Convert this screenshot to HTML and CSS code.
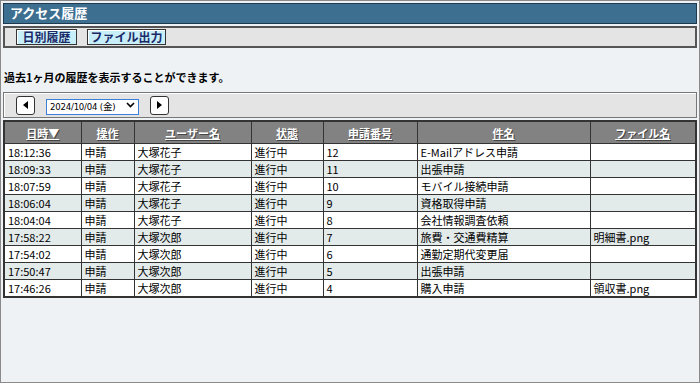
FILE: index.html
```html
<!DOCTYPE html>
<html lang="ja">
<head>
  <meta charset="UTF-8">
  <meta name="viewport" content="width=device-width, initial-scale=1.0">
  <title>アクセス履歴</title>
  <link rel="stylesheet" href="styles.css">
</head>
<body>
  <div class="page">
    <h1 class="title">アクセス履歴</h1>

    <div class="toolbar">
      <button class="tab-btn">日別履歴</button>
      <button class="tab-btn">ファイル出力</button>
    </div>

    <p class="note">過去1ヶ月の履歴を表示することができます。</p>

    <div class="nav">
      <button class="nav-btn"><span class="tri tri-left"></span></button>
      <div class="select-wrap">
        <select class="day-select">
          <option>2024/10/04 (金)</option>
        </select>
        <svg class="chevron" width="9" height="6" viewBox="0 0 9 6"><path d="M1 1 L4.5 4.5 L8 1" fill="none" stroke="#000" stroke-width="1.6"/></svg>
      </div>
      <button class="nav-btn"><span class="tri tri-right"></span></button>
    </div>

    <table class="log">
      <colgroup>
        <col style="width:77px"><col style="width:53px"><col style="width:117px"><col style="width:72px">
        <col style="width:94px"><col style="width:173px"><col>
      </colgroup>
      <thead>
        <tr><th>日時▼</th><th>操作</th><th>ユーザー名</th><th>状態</th><th>申請番号</th><th>件名</th><th>ファイル名</th></tr>
      </thead>
      <tbody>
        <tr><td>18:12:36</td><td>申請</td><td>大塚花子</td><td>進行中</td><td>12</td><td>E-Mailアドレス申請</td><td></td></tr>
        <tr><td>18:09:33</td><td>申請</td><td>大塚花子</td><td>進行中</td><td>11</td><td>出張申請</td><td></td></tr>
        <tr><td>18:07:59</td><td>申請</td><td>大塚花子</td><td>進行中</td><td>10</td><td>モバイル接続申請</td><td></td></tr>
        <tr><td>18:06:04</td><td>申請</td><td>大塚花子</td><td>進行中</td><td>9</td><td>資格取得申請</td><td></td></tr>
        <tr><td>18:04:04</td><td>申請</td><td>大塚花子</td><td>進行中</td><td>8</td><td>会社情報調査依頼</td><td></td></tr>
        <tr><td>17:58:22</td><td>申請</td><td>大塚次郎</td><td>進行中</td><td>7</td><td>旅費・交通費精算</td><td>明細書.png</td></tr>
        <tr><td>17:54:02</td><td>申請</td><td>大塚次郎</td><td>進行中</td><td>6</td><td>通勤定期代変更届</td><td></td></tr>
        <tr><td>17:50:47</td><td>申請</td><td>大塚次郎</td><td>進行中</td><td>5</td><td>出張申請</td><td></td></tr>
        <tr><td>17:46:26</td><td>申請</td><td>大塚次郎</td><td>進行中</td><td>4</td><td>購入申請</td><td>領収書.png</td></tr>
      </tbody>
    </table>
  </div>
</body>
</html>
```

FILE: styles.css
```css
/* 基本 */
html, body { margin: 0; padding: 0; }
body { font-family: "Noto Sans CJK JP", "Liberation Sans", sans-serif; font-size: 11px; color: #000; }
.page { box-sizing: border-box; width: 700px; height: 383px; border: 1px solid #8a8a8a; background: #eef2f5; padding: 2px; }

/* タイトル */
.title { margin: 0; height: 19px; line-height: 18px; padding: 0 6px; background: #3d6f91; border: 1px solid #1d3a4f; color: #fff; font-size: 13px; font-weight: bold; }

/* タブボタン */
.toolbar { margin-top: 2px; height: 18px; padding: 0 10px; background: #e4e4e4; border: 2px solid #555; display: flex; gap: 10px; align-items: center; }
.tab-btn { height: 16px; padding: 0; background: #c8eef9; border: 1px solid #333; box-shadow: inset 1px 1px 0 #fff; color: #1b2a66; font-family: inherit; font-size: 12px; font-weight: bold; line-height: 14px; white-space: nowrap; cursor: pointer; }
.tab-btn:first-child { width: 61px; margin-left: 1px; }
.tab-btn:last-child { width: 79px; }

.note { margin: 21px 0 0 1px; height: 16px; line-height: 16px; font-weight: bold; font-size: 11px; }

/* 日付ナビ */
.nav { margin-top: 7px; height: 22px; padding: 1px 12px; background: #e4e4e4; border: 1px solid #777; box-shadow: inset 1px 1px 0 #fff; display: flex; align-items: center; gap: 11px; }
.nav-btn { width: 19px; height: 19px; padding: 0; background: #fff; border: 1px solid #333; border-radius: 3px; display: flex; align-items: center; justify-content: center; cursor: pointer; }
.tri { width: 0; height: 0; border-top: 4px solid transparent; border-bottom: 4px solid transparent; }
.tri-left { border-right: 5px solid #000; }
.tri-right { border-left: 5px solid #000; }
.select-wrap { position: relative; width: 93px; height: 16px; }
.day-select { appearance: none; -webkit-appearance: none; box-sizing: border-box; width: 93px; height: 16px; padding: 0 0 0 3px; border: 1px solid #3b7fd6; border-radius: 0; background: #fff; font-family: "DejaVu Sans Condensed", "Noto Sans CJK JP", sans-serif; font-size: 9.5px; letter-spacing: -0.2px; color: #000; }
.chevron { position: absolute; right: 4px; top: 5px; pointer-events: none; }

/* 一覧 */
.log { margin-top: 2px; width: 694px; table-layout: fixed; border-collapse: collapse; border: 2px solid #333; }
.log th, .log td { border: 1px solid #333; padding: 0 3px; white-space: nowrap; overflow: hidden; }
.log th { height: 21px; padding: 0 3px; line-height: 20px; background: #828282; color: #fff; font-weight: bold; text-decoration: underline; text-shadow: 1px 1px 0 #444; text-align: center; font-size: 11px; }
.log td { height: 16px; line-height: 15px; background: #fff; font-size: 11px; }
.log tbody tr:nth-child(even) td { background: #e3eaea; }
```
